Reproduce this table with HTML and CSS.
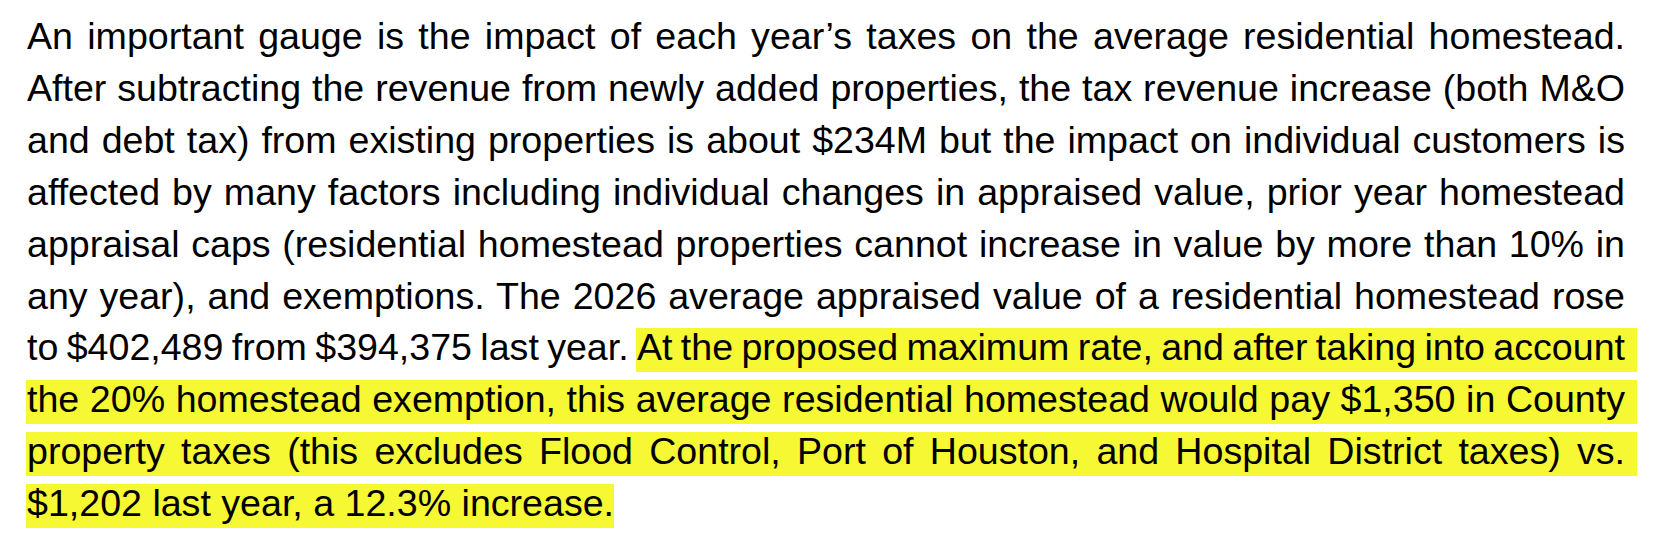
FILE: index.html
```
<!DOCTYPE html>
<html lang="en">
<head>
<meta charset="utf-8">
<title>Homestead tax impact</title>
<link rel="stylesheet" href="styles.css">
</head>
<body>
<p class="para">
<span class="ln">An important gauge is the impact of each year’s taxes on the average residential homestead.</span>
<span class="ln">After subtracting the revenue from newly added properties, the tax revenue increase (both M&amp;O</span>
<span class="ln">and debt tax) from existing properties is about $234M but the impact on individual customers is</span>
<span class="ln">affected by many factors including individual changes in appraised value, prior year homestead</span>
<span class="ln">appraisal caps (residential homestead properties cannot increase in value by more than 10% in</span>
<span class="ln">any year), and exemptions. The 2026 average appraised value of a residential homestead rose</span>
<span class="ln ln-tight">to $402,489 from $394,375 last year. <span class="hl hl-tail">At the proposed maximum rate, and after taking into account</span></span>
<span class="ln"><span class="hl hl-tail">the 20% homestead exemption, this average residential homestead would pay $1,350 in County</span></span>
<span class="ln"><span class="hl hl-tail">property taxes (this excludes Flood Control, Port of Houston, and Hospital District taxes) vs.</span></span>
<span class="ln ln-last"><span class="hl">$1,202 last year, a 12.3% increase.</span></span>
</p>
</body>
</html>
```
FILE: styles.css
```
html, body {
  margin: 0;
  padding: 0;
  background: #ffffff;
}

body {
  padding: 11px 0 0 27px;
}

.para {
  margin: 0;
  width: 1598px;
  font-family: "Liberation Sans", Arial, sans-serif;
  font-size: 37.6px;
  line-height: 51.9px;
  color: #000000;
}

.ln {
  display: block;
  white-space: nowrap;
  text-align: justify;
  text-align-last: justify;
}

.ln-last {
  text-align: left;
  text-align-last: left;
}

.ln-tight {
  word-spacing: -2.3px;
}

.hl {
  padding: 0 0 4px 1px;
  margin-left: -1px;
  background-image: linear-gradient(to bottom, transparent 2px, #f5f833 2px);
}

.hl-tail {
  padding-right: 12px;
  margin-right: -12px;
}
```
